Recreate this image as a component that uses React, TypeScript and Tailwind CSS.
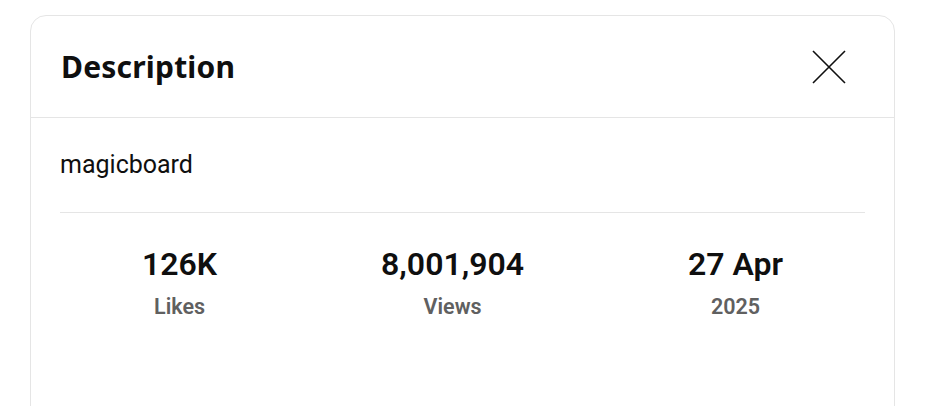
import React from "react";

export default function App() {
  const stats = [
    { v: "126K", l: "Likes" },
    { v: "8,001,904", l: "Views" },
    { v: "27 Apr", l: "2025" },
  ];
  return (
    <div className="w-[926px] h-[406px] bg-white overflow-hidden pt-[15px] pl-[30px]" style={{ fontFamily: "Roboto, 'Liberation Sans', sans-serif" }}>
      <div className="w-[865px] h-[420px] border border-[#e5e5e5] rounded-2xl bg-white">
        <div className="h-[102px] flex items-center justify-between pl-[30px] pr-[48px] border-b border-[#e5e5e5]">
          <h2 className="text-[30px] font-bold text-[#0f0f0f] tracking-[0.2px]" style={{ fontFamily: "'Noto Sans', sans-serif" }}>Description</h2>
          <svg width="34" height="34" viewBox="0 0 34 34">
            <path d="M1 1 L33 33 M33 1 L1 33" stroke="#0f0f0f" strokeWidth="1.6" fill="none" />
          </svg>
        </div>
        <div className="px-[29px]">
          <div className="pt-[30px] pb-[30px] text-[25px] text-[#0f0f0f] leading-[34px]">magicboard</div>
          <div className="border-t border-[#e5e5e5] flex justify-around pt-[32px]">
            {stats.map((s) => (
              <div key={s.l} className="flex flex-col items-center">
                <div className="text-[32px] font-semibold text-[#0f0f0f] leading-[38px]">{s.v}</div>
                <div className="text-[21.5px] font-semibold text-[#606060] leading-[26px] mt-[11px]">{s.l}</div>
              </div>
            ))}
          </div>
        </div>
      </div>
    </div>
  );
}
